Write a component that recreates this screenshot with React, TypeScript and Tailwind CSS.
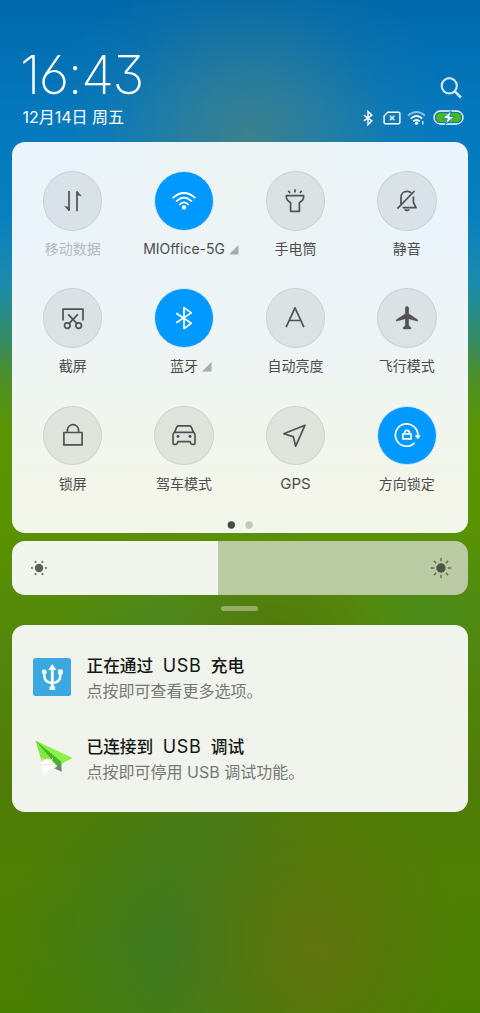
import type { ReactNode } from "react";
import clsx from "clsx";

type Toggle = {
  label: string;
  icon: ReactNode;
  active?: boolean;
  disabled?: boolean;
  expandable?: boolean;
  labelClass?: string;
};

const toggles: Toggle[] = [
  {
    label: "移动数据",
    disabled: true,
    icon: (
      <>
        <path d="M11 5v19.8M19 25.2V5.4" />
        <path d="M11 25 6.8 20.2 11 21.6ZM19 5.2 23.2 10 19 8.6Z" fill="currentColor" strokeWidth="0.6" />
      </>
    ),
  },
  {
    label: "MIOffice-5G",
    active: true,
    expandable: true,
    icon: (
      <>
        <path d="M3.6 12.2Q15 1.8 26.4 12.2M7 15.6Q15 7.6 23 15.6M10.3 19Q15 13.6 19.7 19" strokeWidth="1.8" />
        <circle cx="15" cy="21.4" r="2.2" fill="currentColor" stroke="none" />
      </>
    ),
  },
  {
    label: "手电筒",
    icon: (
      <>
        <path d="M6.4 9.6h17.2v1.6c0 2.6-2 4-4.2 5.4v8.7h-8.8v-8.7C8.4 15.2 6.4 13.8 6.4 11.2Z" />
        <path d="M15 3.3v3.2M8.2 4.8l2 2M21.8 4.8l-2 2" />
      </>
    ),
  },
  {
    label: "静音",
    icon: (
      <>
        <path d="M9 18.5V11.6C9 7.8 11.6 5.3 15 5.3c1.7 0 3.2.6 4.3 1.6M21.4 10.6v5.8l2.6 5.3H10.6" />
        <path d="M22.5 5 5.4 22.7" />
        <path d="M12.4 23.8h5.2q-2.6 2.6-5.2 0Z" fill="currentColor" strokeWidth="0.8" />
      </>
    ),
  },
  {
    label: "截屏",
    icon: (
      <>
        <path d="M5 17.5V6.2h20v11.3" />
        <path d="M10.2 11.4l8.8 9.2M19.8 11.4 11 20.6" />
        <circle cx="9.3" cy="22.6" r="2.8" />
        <circle cx="20.7" cy="22.6" r="2.8" />
      </>
    ),
  },
  {
    label: "蓝牙",
    active: true,
    expandable: true,
    icon: <path d="M7.3 10.2 22.3 20.3 15 25.6V4.6L22.3 9.9 7.3 19.8" />,
  },
  {
    label: "自动亮度",
    icon: <path d="M6.1 24.2 15 4.8l8.9 19.4M9.2 17.5h11.6" />,
  },
  {
    label: "飞行模式",
    icon: (
      <path
        d="M15 3.4c1.2 0 1.7.9 1.7 2.2v5.1l8.9 6v1.5l-8.9-2.4v6.8l2.1 2v1.3h-7.6v-1.3l2.1-2v-6.8L4.4 18.2v-1.5l8.9-6V5.6c0-1.3.5-2.2 1.7-2.2Z"
        fill="currentColor"
        strokeWidth="0.4"
      />
    ),
  },
  {
    label: "锁屏",
    icon: (
      <>
        <path d="M5.9 12.5h18.2v12.4H5.9Z" />
        <path d="M9.4 12.5v-2.3a5.6 5.6 0 0 1 11.2 0v2.3" />
      </>
    ),
  },
  {
    label: "驾车模式",
    icon: (
      <>
        <path d="M5.4 12.4 8 6.7q.4-.9 1.4-.9h11.2q1 0 1.4.9l2.6 5.7Z" />
        <path d="M5.4 12.4Q4 13.4 4 15v8q0 1.4 1.4 1.4h1.5q1 0 1.3-.9l.7-1.9h12.2l.7 1.9q.3.9 1.3.9h1.5Q26 24.4 26 23v-8q0-1.6-1.4-2.6" />
        <circle cx="9" cy="16.2" r="1.5" fill="currentColor" stroke="none" />
        <circle cx="21" cy="16.2" r="1.5" fill="currentColor" stroke="none" />
      </>
    ),
  },
  {
    label: "GPS",
    labelClass: "text-[15px]",
    icon: <path d="M25 5.2 3.8 13.8l9.5 2.8 2.4 9.6Z" />,
  },
  {
    label: "方向锁定",
    active: true,
    icon: (
      <>
        <path d="M25.8 15.5A11.2 11.2 0 1 0 22.6 22.9" />
        <path d="M23.3 15.5h5l-2.5 3.4Z" fill="currentColor" strokeWidth="0.6" />
        <path d="M10.9 13.9h8.2v5h-8.2ZM12.6 13.9v-1.2a2.4 2.4 0 0 1 4.8 0v1.2" />
      </>
    ),
  },
];

const StatusIcons = () => (
  <div className="flex items-center text-white">
    <svg width="16" height="16" viewBox="0 0 30 30" fill="none" stroke="currentColor" strokeWidth="2.6">
      <path d="M7.3 9.7 22.3 20.3 15 27.5V2.5l7.3 7.2L7.3 20.3" />
    </svg>
    <svg className="ml-[7px]" width="18" height="14" viewBox="0 0 18 14" fill="none" stroke="currentColor" strokeWidth="1.4">
      <path d="M4.8 1.3h11q1.1 0 1.1 1.1v9.2q0 1.1-1.1 1.1H2.2q-1.1 0-1.1-1.1V5Z" />
      <path d="m6.8 4.7 4.6 4.6m0-4.6L6.8 9.3" />
    </svg>
    <svg className="ml-[6px]" width="20" height="16" viewBox="0 0 20 16" fill="none" stroke="currentColor" strokeWidth="1.9">
      <path d="M1 5.6q8.500-7.400 17 0" opacity=".55" />
      <path d="M3.800 8.600q5.700-5.200 11.400 0M6.300 11.400q3.200-3 6.400 0" />
      <circle cx="9.500" cy="13.200" r="1.700" fill="currentColor" stroke="none" />
      <path d="M15.800 11v3.600" strokeWidth="1.200" />
    </svg>
    <svg className="ml-[6px]" width="31" height="15" viewBox="0 0 31 15">
      <rect x="1" y="1" width="29" height="13" rx="6.500" fill="none" stroke="#fff" strokeWidth="1.300" />
      <rect x="3" y="3" width="25" height="9" rx="4.500" fill="#4cb81a" />
      <path d="M18.200.6 9.600 8.600h4.700l-1.900 5.800 9.200-8h-4.900Z" fill="#fff" stroke="#1583c2" strokeWidth="1" />
    </svg>
  </div>
);

const Header = () => (
  <header className="flex h-[142px] items-end justify-between pr-[16px] pb-[16px] pl-[21px] text-white">
    <div>
      <div className="-ml-px text-[53.5px] leading-[53px] font-extralight tracking-[-1.5px] [font-feature-settings:'cv09','cv03']">
        16:43
      </div>
      <div className="mt-[7px] pl-[1.5px] text-[16px] leading-[18px] whitespace-nowrap">12月14日 周五</div>
    </div>
    <div className="mb-[0.5px] flex flex-col items-end">
      <svg className="mr-[2px] mb-[10.5px]" width="22" height="22" viewBox="0 0 22 22" fill="none" stroke="#fff" strokeOpacity=".8" strokeWidth="2.2">
        <circle cx="9.3" cy="8.8" r="7.6" />
        <path d="m14.8 14.3 6.2 6.2" strokeWidth="2.6" />
      </svg>
      <StatusIcons />
    </div>
  </header>
);

const ToggleButton = ({ label, icon, active, disabled, expandable, labelClass }: Toggle) => (
  <div className="flex h-[117.3px] flex-col items-center">
    <div
      className={clsx(
        "flex size-[59.5px] items-center justify-center rounded-full border",
        active ? "border-[#d5ebfb] bg-[#0099ff] text-white" : "border-black/[0.08] bg-[#000800]/[0.075] text-[#505254]"
      )}
    >
      <svg width="30" height="30" viewBox="0 0 30 30" fill="none" stroke="currentColor" strokeWidth="1.7" strokeLinejoin="round">
        {icon}
      </svg>
    </div>
    <div className={clsx("mt-[8.5px] flex items-center leading-[20px] whitespace-nowrap", labelClass ?? "text-[14px]")}>
      <span className={disabled ? "text-[#b5babd]" : "text-[#4b4d4e]"}>{label}</span>
      {expandable && (
        <svg className="mt-px mr-[-14px] ml-[4px]" width="10" height="10" viewBox="0 0 10 10">
          <path d="M9.5 0v9.500H0Z" fill="#a9adae" />
        </svg>
      )}
    </div>
  </div>
);

const QuickSettings = () => (
  <section className="flex h-[391px] flex-col rounded-[13px] bg-[radial-gradient(circle_at_50%_10%,#edf4f2_0%,#edf4f200_45%),linear-gradient(#eaf4fc_0%,#ecf4fa_35%,#eff5f1_62%,#f3f6e9_88%,#f3f6ea_100%)] px-[5px] pt-[29px]">
    <div className="grid grid-cols-4">
      {toggles.map((toggle) => (
        <ToggleButton key={toggle.label} {...toggle} />
      ))}
    </div>
    <svg className="mx-auto mt-[-2px]" width="30" height="8" viewBox="0 0 30 8">
      <circle cx="6.3" cy="4" r="3.700" fill="#484a46" />
      <circle cx="24.100" cy="4" r="3.700" fill="#c4c7bd" />
    </svg>
  </section>
);

const BrightnessSlider = () => (
  <section className="mt-[8px] flex h-[53.5px] items-center justify-between overflow-hidden rounded-[13px] bg-[linear-gradient(90deg,#f2f5ee_206.5px,#bacaa3_206.5px)] pr-[15px] pl-[17px]">
    <svg width="20" height="20" viewBox="-10 -10 20 20" fill="#5c5e5a">
      <circle r="4.2" />
      {[0, 60, 120, 180, 240, 300].map((angle) => (
        <circle key={angle} cx="6.9" r="1.15" transform={`rotate(${angle})`} fill="#7b7d79" />
      ))}
    </svg>
    <svg width="24" height="24" viewBox="-12 -12 24 24" fill="#4c5443">
      <circle r="4.7" />
      {[0, 45, 90, 135, 180, 225, 270, 315].map((angle) => (
        <path key={angle} d="M6.8 0h3.4" transform={`rotate(${angle})`} stroke="#5d6850" strokeWidth="1.3" />
      ))}
    </svg>
  </section>
);

const UsbIcon = () => (
  <svg width="38" height="38" viewBox="0 0 38 38" fill="none" stroke="#fff">
    <rect width="38" height="38" rx="2.5" fill="#3ca8e0" stroke="none" />
    <path d="M19.3 10v19" strokeWidth="2.8" />
    <path d="M11.2 14.5v2.500q0 7.500 8.100 8 8.100-.5 8.100-8v-2.500" strokeWidth="2.500" />
    <path d="m19.300 6 4 6h-8Z" fill="#fff" stroke="none" />
    <circle cx="11.200" cy="14" r="2.500" fill="#fff" stroke="none" />
    <path d="M25 11.500h4.800v4.800H25ZM16.500 28.600h5.600v3.400h-5.600Z" fill="#fff" stroke="none" />
  </svg>
);

const PaperPlaneIcon = () => (
  <svg width="40" height="38" viewBox="0 0 40 38">
    <path d="M2.5 1.5 39.5 19 29 24.5Z" fill="#8df046" />
    <path d="M2.5 1.5 9.5 25 25.5 24Z" fill="#84e840" />
    <path d="M2.5 1.5 28.5 23v9.500L22.500 25Z" fill="#45b52a" />
    <path d="m21.500 29.500 5.500-4.500 1.800 7.800Z" fill="#778085" />
    <path d="M8.500 24.500q.5-4.500 5.500-4.800 5.500.3 6.500 4.800l1 2.500-11 9Z" fill="#fff" />
    <path d="M9 25.500h12" stroke="#d6dfd0" strokeWidth=".7" />
    <path d="m10 21-1.200-2.200M18.600 21l1.200-2" stroke="#fff" strokeWidth=".8" />
  </svg>
);

type NotificationProps = {
  icon: ReactNode;
  title: string[];
  text: string;
};

const Notification = ({ icon, title, text }: NotificationProps) => (
  <div className="flex h-[81.3px] gap-[16px] pl-[20.5px]">
    <div className="mt-[4.5px] w-[38px] shrink-0">{icon}</div>
    <div className="whitespace-nowrap">
      <div className="flex gap-[9.5px] text-[16.7px] leading-[24px] font-medium text-[#141614]">
        <span>{title[0]}</span>
        <span className="text-[18px] font-normal tracking-[0.6px]">{title[1]}</span>
        <span>{title[2]}</span>
      </div>
      <div className="mt-px text-[16px] leading-[24px] text-[#767975]">{text}</div>
    </div>
  </div>
);

export default function App() {
  return (
    <main className="h-[1013px] w-[480px] overflow-hidden bg-[radial-gradient(circle_at_250px_140px,#568476b0_0%,#56847668_70px,#5684761c_140px,#56847600_200px),radial-gradient(circle_at_275px_640px,#50700fb0_0%,#50700f00_110px),radial-gradient(circle_at_165px_640px,#47843390_0%,#47843300_120px),radial-gradient(circle_at_430px_610px,#458d2d90_0%,#458d2d00_90px),radial-gradient(ellipse_150px_170px_at_312px_950px,#647210e0_0%,#60721080_45%,#60721000_100%),radial-gradient(ellipse_160px_190px_at_172px_945px,#3c7828d8_0%,#3f7a2480_45%,#3f7a2400_100%),radial-gradient(circle_at_220px_820px,#49782480_0%,#49782400_110px),linear-gradient(#0068ab_0px,#0478be_110px,#077fc0_210px,#1c8bad_285px,#358b62_340px,#4f9026_380px,#5a9403_430px,#5a9302_520px,#53880a_640px,#507c07_780px,#4f7f04_880px,#4a8002_1013px)] font-[Inter,'Noto_Sans_CJK_SC',sans-serif]">
      <Header />
      <div className="pr-[12.5px] pl-[12px]">
        <QuickSettings />
        <BrightnessSlider />
        <div className="mx-auto mt-[11px] h-[5.5px] w-[37px] rounded-full bg-[#96ad66]" />
        <section className="mt-[13.5px] h-[187.5px] rounded-[13px] bg-[#f1f4ec] pt-[29px]">
          <Notification icon={<UsbIcon />} title={["正在通过", "USB", "充电"]} text="点按即可查看更多选项。" />
          <Notification icon={<PaperPlaneIcon />} title={["已连接到", "USB", "调试"]} text="点按即可停用 USB 调试功能。" />
        </section>
      </div>
    </main>
  );
}
